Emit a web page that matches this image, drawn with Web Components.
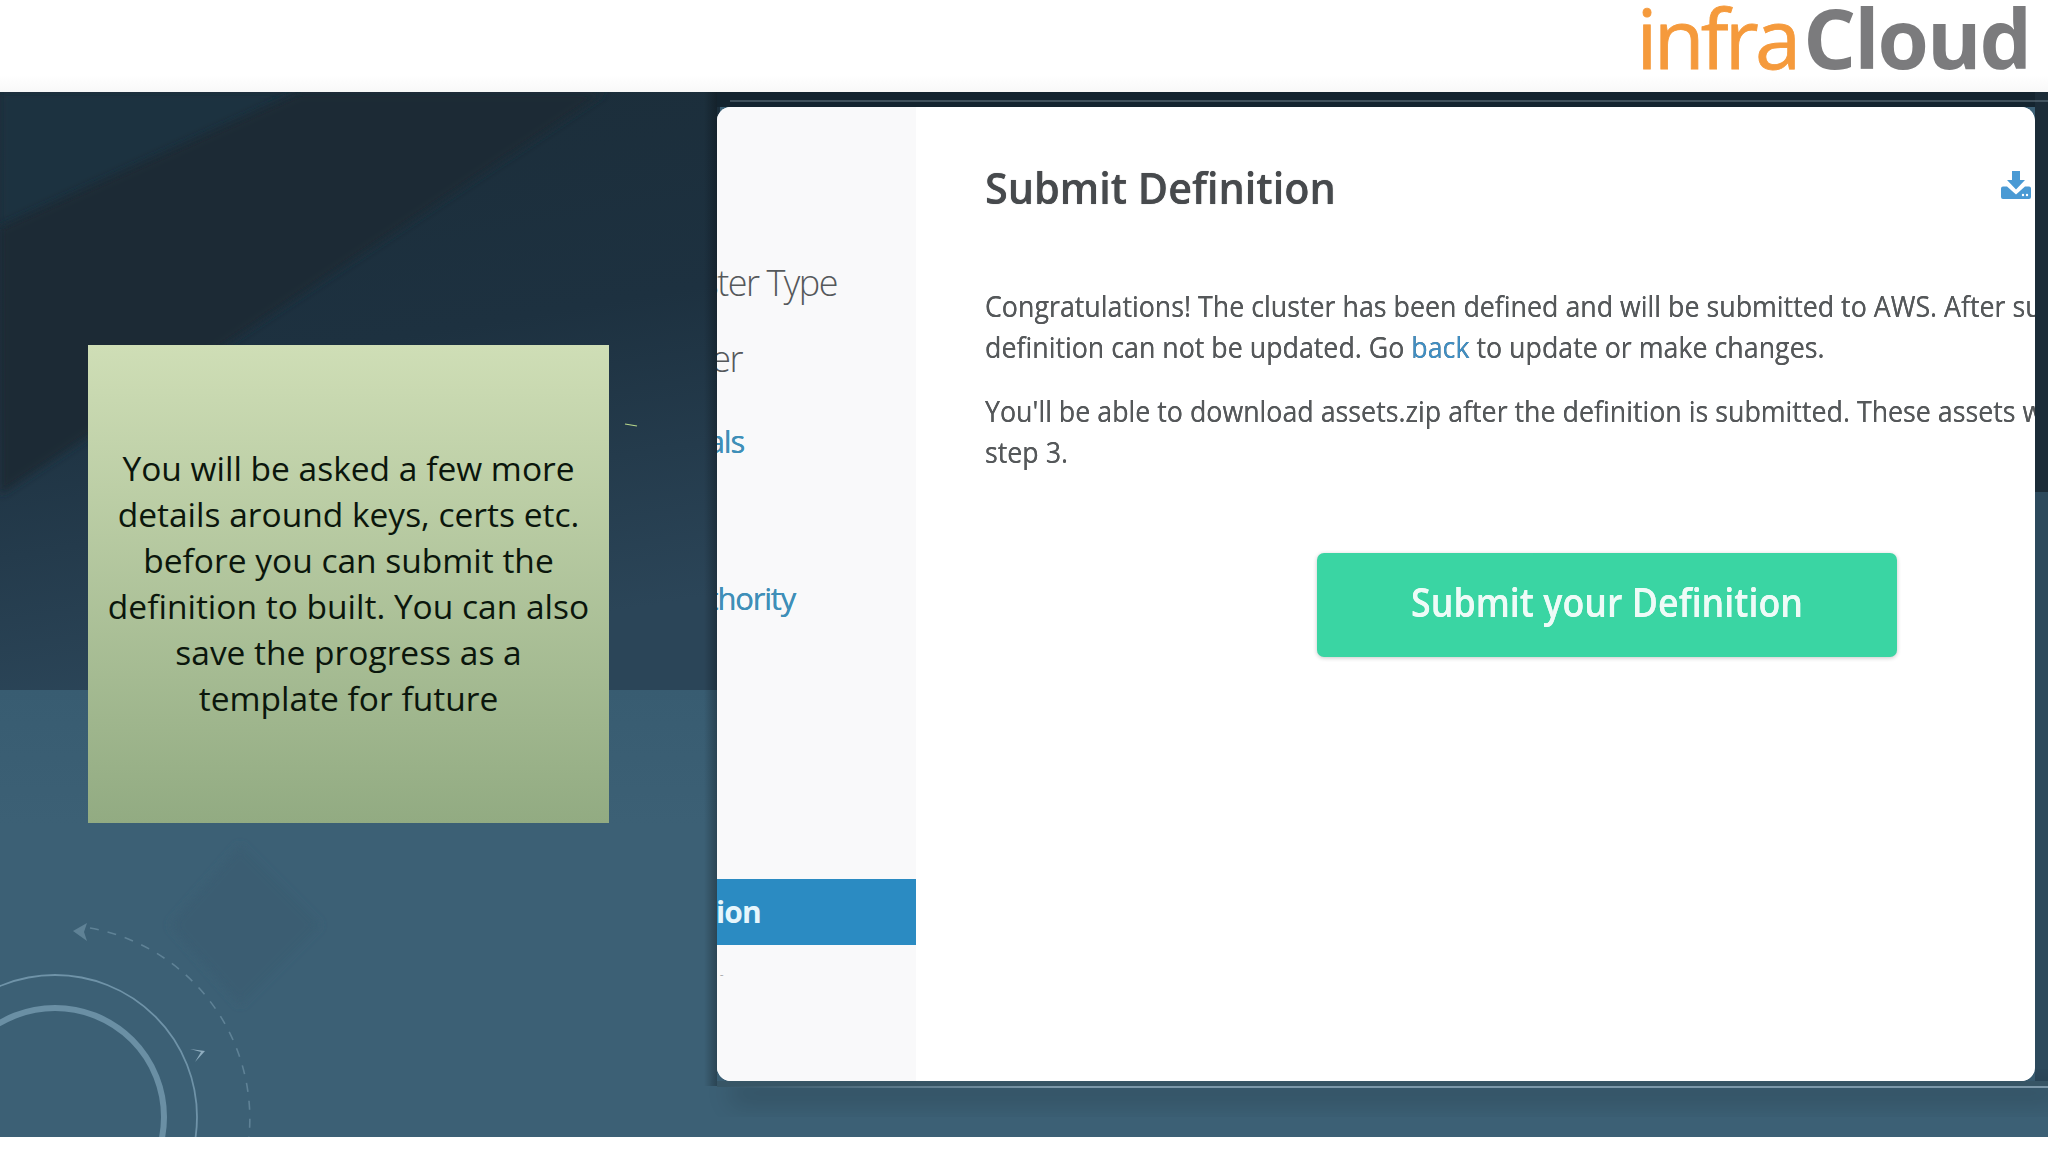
<!DOCTYPE html>
<html lang="en">
<head>
<meta charset="utf-8">
<title>Submit Definition</title>
<style>
html, body { margin: 0; background: #fff; }
</style>
</head>
<body>
<slide-page>
  <slide-header></slide-header>
  <slide-stage>
    <note-box>You will be asked a few more details around keys, certs etc. before you can submit the definition to built. You can also save the progress as a template for future</note-box>
    <wizard-card>
      <side-nav slot="nav">
        <nav-item end="837" top="152">Cluster Type</nav-item>
        <nav-item end="742" top="28">Cluster</nav-item>
        <nav-item end="744" top="34" kind="link">Credentials</nav-item>
        <nav-item end="795" top="109" kind="link">Certificate Authority</nav-item>
        <nav-item end="761" top="257" kind="active">Submit Definition</nav-item>
        <nav-item end="722" top="22" kind="mark">-</nav-item>
      </side-nav>
      <submit-panel></submit-panel>
    </wizard-card>
  </slide-stage>
</slide-page>

<script>
class SlidePage extends HTMLElement {
  constructor() {
    super();
    this.attachShadow({ mode: "open" });
    this.shadowRoot.innerHTML = `<style>
      :host { display: block; width: 2048px; height: 1152px; overflow: hidden; background: #fff; }
    </style><slot></slot>`;
  }
}

class SlideHeader extends HTMLElement {
  constructor() {
    super();
    this.attachShadow({ mode: "open" });
    this.shadowRoot.innerHTML = `<style>
      :host { display: flex; justify-content: flex-end; align-items: center; height: 92px; padding-right: 18px; box-sizing: border-box; background: linear-gradient(#fff 82%, #f8f8f8); }
      .logo { font: 400 83px/1 "Open Sans", sans-serif; margin-top: -19px; color: #f59a3c; letter-spacing: -3.8px; white-space: nowrap; -webkit-text-stroke: .8px #f59a3c; }
      b { font-weight: 700; color: #7b7b7d; letter-spacing: -2px; margin-left: 6px; -webkit-text-stroke: 0; }
    </style><div class="logo">infra<b>Cloud</b></div>`;
  }
}

class SlideStage extends HTMLElement {
  constructor() {
    super();
    this.attachShadow({ mode: "open" });
    this.shadowRoot.innerHTML = `<style>
      :host { display: flex; position: relative; height: 1045px; box-sizing: border-box; padding: 15px 13px 56px 88px; background: #3c6075; overflow: hidden; }
      svg { position: absolute; left: 0; top: 0; }
      ::slotted(*) { position: relative; }
    </style>
    <svg width="2048" height="1045" viewBox="0 92 2048 1045" fill="none">
      <defs>
        <linearGradient id="top" x1="0" y1="0" x2="0.2" y2="1">
          <stop offset="0" stop-color="#1b2d39"/><stop offset=".5" stop-color="#1d3140"/><stop offset="1" stop-color="#2b4558"/>
        </linearGradient>
        <linearGradient id="bottom" x1="0" y1="0" x2="0" y2="1">
          <stop offset="0" stop-color="#385c71"/><stop offset=".3" stop-color="#3c6075"/><stop offset="1" stop-color="#3c6075"/>
        </linearGradient>
        <linearGradient id="edge" x1="0" y1="0" x2="1" y2="0">
          <stop offset="0" stop-color="#000" stop-opacity="0"/><stop offset="1" stop-color="#000" stop-opacity=".28"/>
        </linearGradient>
        <linearGradient id="under" x1="0" y1="0" x2="0" y2="1">
          <stop offset="0" stop-color="#000" stop-opacity=".14"/><stop offset="1" stop-color="#000" stop-opacity="0"/>
        </linearGradient>
        <linearGradient id="glint" x1="0" y1="0" x2="1" y2="0">
          <stop offset="0" stop-color="#7d99aa" stop-opacity="0"/><stop offset=".25" stop-color="#7d99aa"/><stop offset="1" stop-color="#7d99aa"/>
        </linearGradient>
        <filter id="soft"><feGaussianBlur stdDeviation="4"/></filter>
        <filter id="softer" x="-5%" y="-50%" width="110%" height="200%"><feGaussianBlur stdDeviation="12"/></filter>
      </defs>
      <rect x="0" y="92" width="720" height="598" fill="url(#top)"/>
      <polygon points="0,92 300,92 0,227" fill="#1f313f" filter="url(#soft)"/>
      <polygon points="0,227 300,92 606,92 0,495" fill="#1a2b36" filter="url(#soft)"/>
      <rect x="0" y="690" width="720" height="447" fill="url(#bottom)"/>
      <polygon points="170,925 240,845 320,925 240,1005" fill="#3a5d72" filter="url(#soft)"/>
      <circle cx="55" cy="1117" r="142" stroke="#6f93a8" stroke-width="1.8"/>
      <circle cx="55" cy="1117" r="109" stroke="#6a8fa4" stroke-width="6"/>
      <path d="M90 928 A194 194 0 0 1 249 1137" stroke="#5f8296" stroke-width="1.6" stroke-dasharray="9 9"/>
      <polygon points="73,931 87,923 84,932 87,941" fill="#5f8296"/>
      <polygon points="190,1049 205,1051 195,1062 201,1052" fill="#8fadbf"/>
      <path d="M625 424 L637 426" stroke="#b8d88c" stroke-width="1.2"/>
      <rect x="704" y="92" width="13" height="994" fill="url(#edge)"/>
      <rect x="717" y="92" width="1331" height="15" fill="#14242f"/>
      <rect x="2035" y="92" width="13" height="400" fill="#1b2c38"/>
      <rect x="2035" y="492" width="13" height="594" fill="#2c495c"/>
      <rect x="730" y="1081" width="1330" height="24" fill="#000" opacity=".14" filter="url(#softer)"/>
      <rect x="717" y="1081" width="1331" height="6" fill="#375565"/>
      <path d="M730 101 L2048 101" stroke="#6a7c88"/>
      <rect x="725" y="1086" width="1323" height="2" fill="url(#glint)"/>
    </svg>
    <slot></slot>`;
  }
}

class NoteBox extends HTMLElement {
  constructor() {
    super();
    this.attachShadow({ mode: "open" });
    this.shadowRoot.innerHTML = `<style>
      :host { display: flex; align-items: center; justify-content: center; flex: none; box-sizing: border-box; width: 521px; height: 478px; margin-top: 238px; padding: 0 15px 2px; text-align: center; font: 400 33.5px/46px "Open Sans", sans-serif; color: #0b160c; background: linear-gradient(#cfdeb6, #92ab82); }
    </style><div><slot></slot></div>`;
  }
}

class WizardCard extends HTMLElement {
  constructor() {
    super();
    this.attachShadow({ mode: "open" });
    this.shadowRoot.innerHTML = `<style>
      :host { display: flex; flex: none; width: 1318px; height: 974px; margin-left: 108px; border-radius: 14px; overflow: hidden; background: #fff; }
    </style><slot name="nav"></slot><slot></slot>`;
  }
}

class SideNav extends HTMLElement {
  constructor() {
    super();
    this.attachShadow({ mode: "open" });
    this.shadowRoot.innerHTML = `<style>
      :host { display: flex; flex-direction: column; flex: none; width: 199px; background: #f9f9fa; }
    </style><slot></slot>`;
  }
}

class NavItem extends HTMLElement {
  constructor() {
    super();
    this.attachShadow({ mode: "open" });
    const end = Number(this.getAttribute("end"));
    const top = this.getAttribute("top") || 0;
    // the card cuts the labels off on the left, so each one is placed by its right end
    this.shadowRoot.innerHTML = `<style>
      :host { display: flex; justify-content: flex-end; align-items: center; white-space: nowrap; margin-top: ${top}px; padding-right: ${916 - end}px; height: 48px; font: 300 36px/48px "Open Sans", sans-serif; letter-spacing: -1.5px; color: #55585b; }
      :host([kind="link"]) { font-weight: 400; font-size: 31px; color: #3f8fb8; letter-spacing: -1.2px; text-shadow: 0 0 .6px #3f8fb8; }
      :host([kind="active"]) { height: 66px; font-weight: 700; font-size: 30px; color: #e6f6fc; background: #2b8bc2; letter-spacing: -.8px; }
      :host([kind="mark"]) { height: 16px; font-size: 12px; line-height: 16px; color: #888; }
    </style><slot></slot>`;
  }
}

class SubmitPanel extends HTMLElement {
  constructor() {
    super();
    this.attachShadow({ mode: "open" });
    this.shadowRoot.innerHTML = `<style>
      :host { display: flex; flex-direction: column; flex: 1; position: relative; min-width: 0; box-sizing: border-box; padding: 50px 0 0 69px; font: 400 29.5px/41px "Open Sans", sans-serif; color: #55585a; background: #fff; }
      .head { display: flex; justify-content: space-between; align-items: center; height: 60px; padding-right: 4px; }
      h1 { margin: 0; font: 600 44px/60px "Open Sans", sans-serif; color: #474a4d; text-shadow: 0 0 .7px #474a4d; transform: scaleX(.94); transform-origin: left; }
      svg { display: block; margin-top: -4px; }
      p { margin: 0; width: 1400px; text-shadow: 0 0 .5px #55585a; transform: scaleX(.908); transform-origin: left; }
      .first { margin-top: 68px; }
      .next { margin-top: 23px; }
      a { color: #3f8fc4; text-decoration: none; }
      button { align-self: flex-start; width: 580px; height: 104px; margin: 81px 0 0 332px; padding: 0 0 6px; border: 0; border-radius: 7px; font: 600 40px/1 "Open Sans", sans-serif; color: #eefbf7; background: #3ad5a3; box-shadow: 0 1px 4px rgba(0,0,0,.22); }
      button span { display: inline-block; white-space: nowrap; text-shadow: 0 0 .6px #eefbf7; transform: scaleX(.895); }
    </style>
    <div class="head">
      <h1>Submit Definition</h1>
      <svg width="30" height="28" viewBox="0 0 30 28" fill="#4a9ad4"><path d="M11 0h8v9h5l-9 9.5L6 9h5z"/><path d="M0 17.5a2 2 0 0 1 2-2h4l9 8 9-8h4a2 2 0 0 1 2 2V26a2 2 0 0 1-2 2H2a2 2 0 0 1-2-2z"/><circle cx="22" cy="24" r="1.2" fill="#fff"/><circle cx="26" cy="24" r="1.2" fill="#fff"/></svg>
    </div>
    <p class="first">Congratulations! The cluster has been defined and will be submitted to AWS. After submitting, the<br>definition can not be updated. Go <a>back</a> to update or make changes.</p>
    <p class="next">You'll be able to download assets.zip after the definition is submitted. These assets will be used in<br>step 3.</p>
    <button><span>Submit your Definition</span></button>`;
  }
}

customElements.define("slide-page", SlidePage);
customElements.define("slide-header", SlideHeader);
customElements.define("slide-stage", SlideStage);
customElements.define("note-box", NoteBox);
customElements.define("wizard-card", WizardCard);
customElements.define("side-nav", SideNav);
customElements.define("nav-item", NavItem);
customElements.define("submit-panel", SubmitPanel);
</script>
</body>
</html>
